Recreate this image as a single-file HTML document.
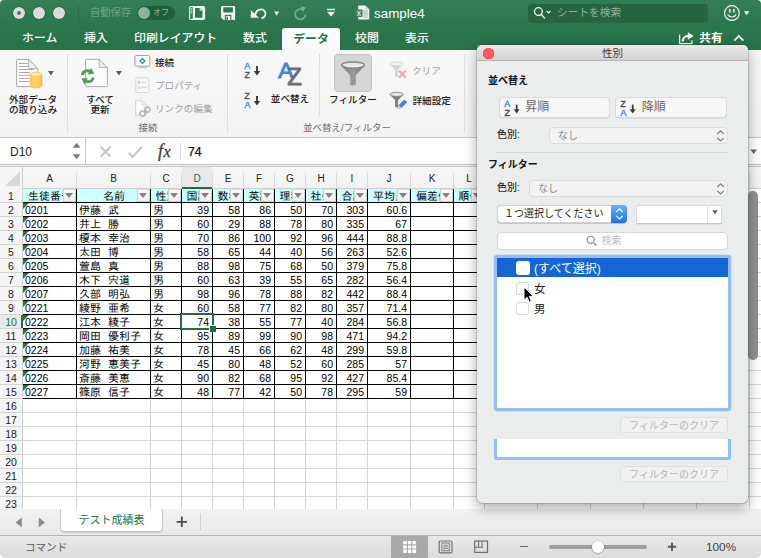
<!DOCTYPE html><html lang="ja"><head><meta charset="utf-8"><title>sample4</title><style>*{box-sizing:border-box;margin:0;padding:0}
html,body{width:761px;height:558px;overflow:hidden;background:#fff}
body{font-family:"Liberation Sans","Noto Sans CJK JP",sans-serif;font-size:11px;color:#222;position:relative}
.abs{position:absolute}
div{white-space:nowrap}
#titlebar{position:absolute;left:0;top:0;width:761px;height:50px;border-radius:4px 4px 0 0;background:linear-gradient(#337e54 0,#2f7a50 14px,#2a764b 28px,#27724a 50px)}
.tl{position:absolute;top:7px;width:12px;height:12px;border-radius:50%;background:#dcdcdc;box-shadow:0 0 0 0.6px rgba(20,70,40,.55)}
.tab{position:absolute;top:28px;height:22px;line-height:21px;font-size:11.9px;color:#fff;font-weight:500}
.tab.act{background:linear-gradient(#ffffff,#f8f8f8);color:#217346;border-radius:3px 3px 0 0;text-align:center;font-weight:700;line-height:23.5px;font-size:11.8px}
#ribbon{position:absolute;left:0;top:50px;width:761px;height:88px;background:linear-gradient(#f8f8f8,#f3f3f3);border-bottom:1px solid #c4c4c4}
.rl{position:absolute;font-size:9.6px;color:#1a1a1a;line-height:11px;font-weight:500}
.rl.dim{color:#9e9e9e;font-weight:400}
.rsep{position:absolute;width:1px;background:#dedede}
.glabel{position:absolute;font-size:9.5px;color:#6a6a6a;top:72px;line-height:12px}
#fbar{position:absolute;left:0;top:138px;width:761px;height:27px;background:#fff;border-bottom:1px solid #c6c6c6}
#grid{position:absolute;left:0;top:165px;width:761px;height:344px;background:#fff;overflow:hidden}
.ch{position:absolute;top:3px;height:21px;line-height:21px;text-align:center;font-size:10px;color:#222}
.rh{position:absolute;left:0;width:22px;height:13px;line-height:14px;text-align:center;font-size:10.5px;color:#222}
.vl{position:absolute;width:1px;background:#d4d4d4}
.hl{position:absolute;height:1px;background:#d4d4d4}
.bvl{position:absolute;width:1px;background:#000}
.bhl{position:absolute;height:1px;background:#000}
.c{position:absolute;height:13px;line-height:14px;font-size:11px;color:#000;overflow:hidden;font-family:"Liberation Sans","IPAGothic","Noto Sans CJK JP",sans-serif}
.c.r{text-align:right}
.c.n{font-size:10.5px}
.c.h{text-align:center;background:#ccffff}
.c i{font-style:normal;letter-spacing:-4px}
.fb{position:absolute;width:13.5px;height:13px;background:linear-gradient(#fbfbfb,#eeeeee);border:1px solid #d0d0d0;border-top-color:#dcdcdc}
.fb:after{content:"";position:absolute;left:1.4px;top:3.2px;border:4.2px solid transparent;border-top:5.2px solid #848484;border-bottom:0}
.tri{position:absolute;width:0;height:0;border-top:6px solid #1a7a38;border-right:6px solid transparent}
#sheetbar{position:absolute;left:0;top:509px;width:761px;height:27px;background:linear-gradient(#f2f2f2,#e9e9e9)}
#status{position:absolute;left:0;top:535px;width:761px;height:23px;border-radius:0 0 5px 5px;overflow:hidden;background:linear-gradient(#e9e9e9,#dcdcdc);border-top:1px solid #b4b4b4}
#pop{position:absolute;left:477px;top:45px;width:271px;height:458px;background:#ebecec;border-radius:5px;box-shadow:0 0 0 0.5px rgba(0,0,0,.28),0 5px 14px rgba(0,0,0,.35)}
#pop .ttl{position:absolute;left:0;top:0;width:271px;height:16px;background:linear-gradient(#eaeaea,#d2d2d2);border-radius:5px 5px 0 0;border-bottom:1px solid #b6b6b6;text-align:center;font-size:10.5px;line-height:17px;color:#3a3a3a}
.pb{position:absolute;height:21px;background:#f7f7f7;border:1px solid #dadada;border-radius:4px;box-shadow:0 0.5px 0.5px rgba(0,0,0,.12);font-size:12px;line-height:19px;color:#6a6a6a}
.sel{position:absolute;height:17px;background:#f3f3f3;border:1px solid #dcdcdc;border-radius:4px;font-size:10px;line-height:15px;color:#8a8a8a;padding-left:8px}
.plabel{position:absolute;font-size:10px;color:#2a2a2a;line-height:14px;font-weight:500}
.pbold{position:absolute;font-size:10px;font-weight:700;color:#111;line-height:14px}
.clr{position:absolute;left:143px;width:108px;height:16px;border:1px solid #dedede;border-radius:3.5px;background:#f1f1f1;color:#b4b4b4;font-size:10px;line-height:15.4px;text-align:center}
.cb{position:absolute;width:13.4px;height:13.4px;background:#fff;border:1px solid #d6d6d6;border-radius:3px}
</style></head><body>
<div id="titlebar">
<div class="tl" style="left:13px"></div>
<div class="tl" style="left:33px"></div>
<div class="tl" style="left:53px"></div>
<div class="abs" style="left:17px;top:11px;width:4px;height:4px;border-radius:50%;background:#6c6c6c"></div>
<div class="abs" style="left:78px;top:5px;width:1px;height:17px;background:rgba(0,0,0,.13)"></div>
<div class="abs" style="left:90px;top:6px;font-size:10.3px;line-height:14px;color:rgba(255,255,255,.33)">自動保存</div>
<div class="abs" style="left:137px;top:6px;width:38px;height:14px;border-radius:7px;background:#1d5f3b"></div>
<div class="abs" style="left:138px;top:7px;width:12px;height:12px;border-radius:50%;background:#8db49e"></div>
<div class="abs" style="left:153px;top:7px;font-size:8px;line-height:12px;color:rgba(255,255,255,.55)">オフ</div>
<svg class="abs" style="left:188px;top:5px;" width="18" height="16" viewBox="0 0 18 16"><rect x="1" y="0.9" width="16.1" height="14.2" rx="1.8" fill="#f4f8f5"/><rect x="2.3" y="2.2" width="2.5" height="11.6" fill="#2d784e"/><circle cx="3.55" cy="3.7" r="0.6" fill="#f4f8f5"/><circle cx="3.55" cy="5.7" r="0.6" fill="#f4f8f5"/><circle cx="3.55" cy="7.7" r="0.6" fill="#f4f8f5"/><path d="M7 2.9h4.4l3.1 3.1v6.8h-7.5z" fill="#2d784e"/><path d="M11.4 2.9v3.1h3.1z" fill="#f4f8f5" stroke="#2d784e" stroke-width="0.5"/></svg>
<svg class="abs" style="left:220px;top:5px;" width="16" height="16" viewBox="0 0 16 16"><path d="M2.5 0.9h11.2a1.4 1.4 0 0 1 1.4 1.4v11.4a1.4 1.4 0 0 1-1.4 1.4h-10l-2.6-2.4v-10.4a1.4 1.4 0 0 1 1.4-1.4z" fill="#f4f8f5"/><rect x="3.3" y="2.2" width="9.6" height="5.4" rx="0.6" fill="#2d784e"/><rect x="4.8" y="9.8" width="6.6" height="5.3" fill="#2d784e"/><rect x="5.9" y="10.9" width="4.4" height="4.2" fill="#f4f8f5"/><rect x="6.6" y="11.8" width="1.4" height="3.3" fill="#2d784e"/></svg>
<svg class="abs" style="left:250px;top:6px;" width="18" height="14" viewBox="0 0 18 14"><path d="M5.4 8.2 C6.6 3.4 12 2 14.6 5.2 C16.8 8 15 11.4 12.2 12" fill="none" stroke="#f4f8f5" stroke-width="1.8" stroke-linecap="round"/><path d="M0.8 3.9v7.9h8.2z" fill="#f4f8f5"/></svg>
<svg class="abs" style="left:274px;top:11px;" width="6" height="5" viewBox="0 0 6 5"><path d="M0 0.6h5.2l-2.6 3.9z" fill="#f4f8f5"/></svg>
<svg class="abs" style="left:293px;top:6px;" width="15" height="15" viewBox="0 0 15 15"><path d="M9.4 3.4 A5.2 5.2 0 1 0 12.6 8.4" fill="none" stroke="rgba(255,255,255,.36)" stroke-width="1.7"/><path d="M7.6 0.6l5.4 1-3 4.4z" fill="rgba(255,255,255,.36)"/></svg>
<svg class="abs" style="left:326px;top:8px;" width="10" height="9" viewBox="0 0 10 9"><path d="M1 1.5h8" stroke="#f4f8f5" stroke-width="1.4"/><path d="M1 3.8h8l-4 4.6z" fill="#f4f8f5"/></svg>
<svg class="abs" style="left:355px;top:5px;" width="15" height="15" viewBox="0 0 15 15"><path d="M3.2 0.6h7.2l3.8 3.8v10h-11z" fill="#f2f4f3"/><path d="M10.4 0.6v3.8h3.8z" fill="#c9d6ce"/><path d="M8.3 6h4.6M8.3 8h4.6M8.3 10h4.6M8.3 12h4.6" stroke="#8fae9c" stroke-width="0.9"/><rect x="0.4" y="4.4" width="7.2" height="7.6" rx="0.8" fill="#3f7f5c"/><text x="4" y="10.6" font-size="6.5" font-weight="700" fill="#dfe9e3" text-anchor="middle" font-family="Liberation Sans, sans-serif">X</text></svg>
<div class="abs" style="left:374px;top:5.5px;font-size:13.4px;line-height:16px;color:#fff">sample4</div>
<div class="abs" style="left:528px;top:4px;width:180px;height:19px;border-radius:4px;background:#27653f"></div>
<svg class="abs" style="left:533px;top:6px;" width="20" height="14" viewBox="0 0 20 14"><circle cx="5.4" cy="5.6" r="3.9" fill="none" stroke="#f4f8f5" stroke-width="1.3"/><path d="M8.2 8.6l3.2 3.4" stroke="#f4f8f5" stroke-width="1.5" stroke-linecap="round"/><path d="M13.6 5l1.9 1.9 1.9-1.9" fill="none" stroke="#f4f8f5" stroke-width="1.1"/></svg>
<div class="abs" style="left:557px;top:5px;font-size:10.7px;line-height:15px;color:rgba(255,255,255,.5)">シートを検索</div>
<svg class="abs" style="left:723px;top:4px;" width="18" height="18" viewBox="0 0 18 18"><circle cx="8.9" cy="9.05" r="7.4" fill="none" stroke="#f4f8f5" stroke-width="1.2"/><path d="M6.8 5v3.4M10.9 5v3.4" stroke="#f4f8f5" stroke-width="1.5"/><path d="M4.9 10.9c1.8 2.8 6.2 2.8 8 0" fill="none" stroke="#f4f8f5" stroke-width="1.2" stroke-linecap="round"/></svg>
<svg class="abs" style="left:744px;top:11px;" width="6" height="5" viewBox="0 0 6 5"><path d="M0 0.2h5.3l-2.65 4z" fill="#f4f8f5"/></svg>
<div class="tab" style="left:22px">ホーム</div>
<div class="tab" style="left:84px">挿入</div>
<div class="tab" style="left:134px">印刷レイアウト</div>
<div class="tab" style="left:243px">数式</div>
<div class="tab" style="left:355px">校閲</div>
<div class="tab" style="left:405px">表示</div>
<div class="tab act" style="left:282px;width:58px">データ</div>
<svg class="abs" style="left:677px;top:31px;" width="18" height="14" viewBox="0 0 18 14"><path d="M2.6 3.4v9.2h12.3v-3.400" fill="none" stroke="#f4f8f5" stroke-width="1.3"/><path d="M5.6 10.6c0.300-3.800 2.600-5.600 6.200-5.800" fill="none" stroke="#f4f8f5" stroke-width="2.1"/><path d="M10.8 1.200l5.800 3.700-5.800 3.900z" fill="#f4f8f5"/></svg>
<div class="tab" style="left:699.3px;top:27.3px;font-size:11.6px;font-weight:700">共有</div>
<svg class="abs" style="left:733px;top:33.5px;" width="12" height="8" viewBox="0 0 12 8"><path d="M1.2 6.600l4.600-4.500 4.600 4.500" fill="none" stroke="#f4f8f5" stroke-width="1.9"/></svg>
</div>
<div id="ribbon">
<svg class="abs" style="left:15px;top:8px;" width="28" height="31" viewBox="0 0 28 31"><defs><linearGradient id="cy" x1="0" x2="1"><stop offset="0" stop-color="#fbc955"/><stop offset=".5" stop-color="#fdd468"/><stop offset="1" stop-color="#f6c24c"/></linearGradient></defs><path d="M2.6 1.4h11l9.2 9.2v17a1 1 0 0 1-1 1h-19.2a1 1 0 0 1-1-1v-25.2a1 1 0 0 1 1-1z" fill="#ffffff" stroke="#a9a9a9" stroke-width="1"/><path d="M13.6 1.4v8.2a1 1 0 0 0 1 1h8.2z" fill="#f0f0f0" stroke="#a9a9a9" stroke-width="0.9"/><path d="M4 5.4h9M4 8.4h9M4 11.5h14.5M4 14.5h11M4 17.4h10.6M4 20.4h10.6M4 23.4h10.6" stroke="#a6a6a6" stroke-width="1"/><path d="M15.2 16.3v11.2c0 1.4 2.7 2.4 5.9 2.4s5.9-1 5.9-2.4v-11.2z" fill="url(#cy)" stroke="#e6b33e" stroke-width="0.6"/><ellipse cx="21.1" cy="16.3" rx="5.9" ry="2.1" fill="#ffe9a9" stroke="#ebb945" stroke-width="0.6"/></svg>
<svg class="abs" style="left:47.6px;top:21px;" width="6" height="5" viewBox="0 0 6 5"><path d="M0 0h5.8l-2.9 4.4z" fill="#5a5a5a"/></svg>
<div class="rl" style="left:3px;top:44.7px;text-align:center;width:60px;line-height:10.6px">外部データ<br>の取り込み</div>
<div class="rsep" style="left:67px;top:4px;height:79px"></div>
<svg class="abs" style="left:80px;top:8px;" width="29" height="31" viewBox="0 0 29 31"><path d="M6.6 1.4h12.6l8.2 8.2v18a1 1 0 0 1-1 1h-19.8a1 1 0 0 1-1-1v-25.2a1 1 0 0 1 1-1z" fill="#fcfcfc" stroke="#adadad" stroke-width="1"/><path d="M19.2 1.4v7.2a1 1 0 0 0 1 1h7.2z" fill="#ebebeb" stroke="#adadad" stroke-width="0.9"/><path d="M1 17c0.4-4.4 5-6.8 9-5.2l1-2 3.2 6-6.4 0.6 1-2c-2.2-0.8-4.4 0.2-5 2.6z" fill="#4f9d5a"/><path d="M14.6 19.4c-0.4 4.4-5 6.8-9 5.2l-1 2-3.2-6 6.4-0.6-1 2c2.2 0.8 4.4-0.2 5-2.6z" fill="#4f9d5a"/></svg>
<svg class="abs" style="left:116px;top:21px;" width="6" height="5" viewBox="0 0 6 5"><path d="M0 0h5.8l-2.9 4.4z" fill="#5a5a5a"/></svg>
<div class="rl" style="left:70px;top:44.7px;text-align:center;width:60px;line-height:10.6px">すべて<br>更新</div>
<svg class="abs" style="left:134px;top:5px;" width="17" height="14" viewBox="0 0 17 14"><rect x="0.9" y="0.6" width="15" height="10.6" rx="1.4" fill="#fff" stroke="#9a9a9a" stroke-width="1"/><path d="M5.5 11.4h6.6l0.8 1.9h-8.2z" fill="#c8c8c8"/><path d="M8.4 2.6l3.3 3.3-3.3 3.3-3.3-3.3z" fill="#2f7fe0"/><circle cx="8.4" cy="5.9" r="1.2" fill="#fff"/></svg>
<div class="rl" style="left:155px;top:6.5px">接続</div>
<svg class="abs" style="left:135px;top:27px;" width="15" height="17" viewBox="0 0 15 17"><rect x="0.8" y="0.8" width="13" height="14.8" rx="1.6" fill="#f8f8f8" stroke="#d6d6d6" stroke-width="1"/><circle cx="4" cy="5.4" r="1.2" fill="#a9c6ee"/><path d="M6.4 5.4h5" stroke="#b9d0ee" stroke-width="1"/><circle cx="4" cy="10.4" r="1.1" fill="none" stroke="#cfcfcf" stroke-width="0.8"/><path d="M6.4 10.4h5" stroke="#d0d0d0" stroke-width="1"/></svg>
<div class="rl dim" style="left:155px;top:29.5px">プロパティ</div>
<svg class="abs" style="left:134px;top:50px;" width="18" height="18" viewBox="0 0 18 18"><path d="M1.6 0.8h6.6l4 4v10.6h-10.6z" fill="#fafafa" stroke="#d4d4d4" stroke-width="1"/><path d="M8.2 0.8v4h4" fill="none" stroke="#d4d4d4" stroke-width="0.8"/><g fill="none" stroke="#b4b4b4" stroke-width="1.5"><circle cx="8.6" cy="13.6" r="2.6"/><circle cx="13.4" cy="9.6" r="2.6"/><path d="M9.8 12.6l2.6-2.2"/></g></svg>
<div class="rl dim" style="left:155px;top:52.5px">リンクの編集</div>
<div class="glabel" style="left:138.5px">接続</div>
<div class="rsep" style="left:227px;top:4px;height:79px"></div>
<svg class="abs" style="left:244px;top:12px;" width="18" height="18" viewBox="0 0 18 18"><text x="0.3" y="6.9" font-size="9" font-weight="400" stroke="#3f84d8" stroke-width="0.3" fill="#3f84d8" font-family="Liberation Sans, sans-serif">A</text><text x="0.5" y="15.9" font-size="9" font-weight="400" stroke="#505050" stroke-width="0.3" fill="#505050" font-family="Liberation Sans, sans-serif">Z</text><path d="M13 4v7" stroke="#3a3a3a" stroke-width="1.9"/><path d="M9.8 9.1h6.4l-3.2 4.3z" fill="#3a3a3a"/></svg>
<svg class="abs" style="left:244px;top:42px;" width="18" height="18" viewBox="0 0 18 18"><text x="0.3" y="6.9" font-size="9" font-weight="400" stroke="#505050" stroke-width="0.3" fill="#505050" font-family="Liberation Sans, sans-serif">Z</text><text x="0.5" y="15.9" font-size="9" font-weight="400" stroke="#3f84d8" stroke-width="0.3" fill="#3f84d8" font-family="Liberation Sans, sans-serif">A</text><path d="M13 4v7" stroke="#3a3a3a" stroke-width="1.9"/><path d="M9.8 9.1h6.4l-3.2 4.3z" fill="#3a3a3a"/></svg>
<svg class="abs" style="left:276px;top:8px;" width="28" height="30" viewBox="0 0 28 30"><text x="2.3" y="20.1" font-size="22.8" font-weight="400" fill="#4384d6" stroke="#4384d6" stroke-width="0.9" font-family="Liberation Sans, sans-serif">A</text><text x="11.2" y="27.2" font-size="24" font-weight="400" fill="#6c6c6c" stroke="#6c6c6c" stroke-width="0.8" font-family="Liberation Sans, sans-serif">Z</text></svg>
<div class="rl" style="left:260px;top:42.5px;width:60px;text-align:center">並べ替え</div>
<div class="rsep" style="left:319px;top:4px;height:62px"></div>
<div class="abs" style="left:334px;top:4px;width:38px;height:38px;border-radius:4px;background:#d6d6d6;border:1px solid #c2c2c2"></div>
<svg class="abs" style="left:340px;top:10px;" width="26" height="27" viewBox="0 0 26 27"><defs><linearGradient id="fg" x1="0" x2="1"><stop offset="0" stop-color="#808080"/><stop offset=".5" stop-color="#989898"/><stop offset="1" stop-color="#7a7a7a"/></linearGradient><linearGradient id="fe" x1="0" x2="0" y1="0" y2="1"><stop offset="0" stop-color="#dcdcdc"/><stop offset="1" stop-color="#f6f6f6"/></linearGradient></defs><path d="M1.2 5h23.6c-1.6 3.6-6.4 6.6-9 10.4v8.6c0 2-5.6 2-5.6 0v-8.6c-2.6-3.8-7.400-6.800-9-10.400z" fill="url(#fg)"/><ellipse cx="13" cy="5" rx="11.4" ry="3.1" fill="url(#fe)" stroke="#868686" stroke-width="1.5"/></svg>
<div class="rl" style="left:323px;top:43.5px;width:60px;text-align:center">フィルター</div>
<svg class="abs" style="left:389px;top:11px;" width="19" height="19" viewBox="0 0 19 19"><path d="M0.8 3h13.4l-5.2 5.8v6.4c0 1-3 1-3 0v-6.4z" fill="#d4d4d4"/><ellipse cx="7.5" cy="3" rx="6.7" ry="1.9" fill="#f4f4f4" stroke="#cfcfcf" stroke-width="0.8"/><path d="M10 9.6l7 7M17 9.6l-7 7" stroke="#ecaeae" stroke-width="2.2"/></svg>
<div class="rl dim" style="left:412px;top:14.6px">クリア</div>
<svg class="abs" style="left:389px;top:41px;" width="19" height="19" viewBox="0 0 19 19"><path d="M0.8 3.4h13.6l-5.3 5.8v6.6c0 1-3 1-3 0v-6.6z" fill="#7e7e7e"/><ellipse cx="7.6" cy="3.4" rx="6.8" ry="2" fill="#e8e8e8" stroke="#868686" stroke-width="0.9"/><path d="M8.4 18l1.2-3.8 5.8-5.8 2.8 2.8-5.8 5.8z" fill="#3d86dc"/><path d="M8.4 18l1.2-3.8 2.7 2.7z" fill="#d8d8d8"/></svg>
<div class="rl" style="left:412.5px;top:45px">詳細設定</div>
<div class="glabel" style="left:303px">並べ替え/フィルター</div>
<div class="rsep" style="left:464px;top:4px;height:79px"></div>
</div>
<div id="fbar">
<div class="abs" style="left:10px;top:6px;font-size:12px;line-height:16px;color:#222">D10</div>
<svg class="abs" style="left:72px;top:4px;" width="10" height="19" viewBox="0 0 10 19"><path d="M0.8 5.8l3.8-5 3.8 5z" fill="#787878"/><path d="M0.8 12.2l3.8 5 3.8-5z" fill="#787878"/></svg>
<div class="abs" style="left:85px;top:0;width:1px;height:27px;background:#cccccc"></div>
<svg class="abs" style="left:99px;top:7px;" width="14" height="14" viewBox="0 0 14 14"><path d="M1.6 1.8l10 10M11.6 1.8l-10 10" stroke="#c8c8c8" stroke-width="2.2"/></svg>
<svg class="abs" style="left:127px;top:7px;" width="16" height="14" viewBox="0 0 16 14"><path d="M1.5 7.7l4.2 4.2 9-10" fill="none" stroke="#c8c8c8" stroke-width="2.2"/></svg>
<div class="abs" style="left:158px;top:4px;font-size:18px;line-height:18px;color:#3c3c3c;font-family:'Liberation Serif',serif;font-style:italic;-webkit-text-stroke:0.3px #3c3c3c">f<span style="font-size:16px;margin-left:0.5px">x</span></div>
<div class="abs" style="left:180px;top:5px;width:1px;height:17px;background:#d8d8d8"></div>
<div class="abs" style="left:188px;top:6px;font-size:12.2px;line-height:16px;color:#111;-webkit-text-stroke:0.25px #111">74</div>
<svg class="abs" style="left:750px;top:11px;" width="8" height="6" viewBox="0 0 8 6"><path d="M0.4 0.4h6.6l-3.3 4.6z" fill="#666"/></svg>
</div>
<div id="grid">
<div class="abs" style="left:0;top:0;width:761px;height:2px;background:#f0f0f0;border-bottom:1px solid #c9c9c9"></div>
<div class="abs" style="left:0;top:2px;width:761px;height:22px;background:linear-gradient(#f7f7f7,#f2f2f2);border-bottom:1px solid #cfcfcf"></div>
<div class="abs" style="left:0;top:2px;width:23px;height:342px;background:#f5f5f5;border-right:1px solid #cfcfcf"></div>
<svg class="abs" style="left:5px;top:6px;" width="16" height="16" viewBox="0 0 16 16"><path d="M15 0.200v14.800h-14.800z" fill="#d8d8d8"/></svg>
<div class="ch" style="left:23px;width:53px;">A</div>
<div class="vl" style="left:76px;top:4px;height:20px;background:linear-gradient(rgba(214,214,214,0),#d9d9d9 40%)"></div>
<div class="vl" style="left:76px;top:24px;height:321px"></div>
<div class="ch" style="left:77px;width:73px;">B</div>
<div class="vl" style="left:150px;top:4px;height:20px;background:linear-gradient(rgba(214,214,214,0),#d9d9d9 40%)"></div>
<div class="vl" style="left:150px;top:24px;height:321px"></div>
<div class="ch" style="left:151px;width:30px;">C</div>
<div class="vl" style="left:181px;top:4px;height:20px;background:linear-gradient(rgba(214,214,214,0),#d9d9d9 40%)"></div>
<div class="vl" style="left:181px;top:24px;height:321px"></div>
<div class="abs" style="left:182px;top:2px;width:30px;height:22px;background:#e9e9e9;border-bottom:2px solid #1e6e42"></div>
<div class="ch" style="left:182px;width:30px;color:#1e6e42;">D</div>
<div class="vl" style="left:212px;top:4px;height:20px;background:linear-gradient(rgba(214,214,214,0),#d9d9d9 40%)"></div>
<div class="vl" style="left:212px;top:24px;height:321px"></div>
<div class="ch" style="left:213px;width:30px;">E</div>
<div class="vl" style="left:243px;top:4px;height:20px;background:linear-gradient(rgba(214,214,214,0),#d9d9d9 40%)"></div>
<div class="vl" style="left:243px;top:24px;height:321px"></div>
<div class="ch" style="left:244px;width:30px;">F</div>
<div class="vl" style="left:274px;top:4px;height:20px;background:linear-gradient(rgba(214,214,214,0),#d9d9d9 40%)"></div>
<div class="vl" style="left:274px;top:24px;height:321px"></div>
<div class="ch" style="left:275px;width:30px;">G</div>
<div class="vl" style="left:305px;top:4px;height:20px;background:linear-gradient(rgba(214,214,214,0),#d9d9d9 40%)"></div>
<div class="vl" style="left:305px;top:24px;height:321px"></div>
<div class="ch" style="left:306px;width:30px;">H</div>
<div class="vl" style="left:336px;top:4px;height:20px;background:linear-gradient(rgba(214,214,214,0),#d9d9d9 40%)"></div>
<div class="vl" style="left:336px;top:24px;height:321px"></div>
<div class="ch" style="left:337px;width:30px;">I</div>
<div class="vl" style="left:367px;top:4px;height:20px;background:linear-gradient(rgba(214,214,214,0),#d9d9d9 40%)"></div>
<div class="vl" style="left:367px;top:24px;height:321px"></div>
<div class="ch" style="left:368px;width:42px;">J</div>
<div class="vl" style="left:410px;top:4px;height:20px;background:linear-gradient(rgba(214,214,214,0),#d9d9d9 40%)"></div>
<div class="vl" style="left:410px;top:24px;height:321px"></div>
<div class="ch" style="left:411px;width:42px;">K</div>
<div class="vl" style="left:453px;top:4px;height:20px;background:linear-gradient(rgba(214,214,214,0),#d9d9d9 40%)"></div>
<div class="vl" style="left:453px;top:24px;height:321px"></div>
<div class="ch" style="left:454px;width:30px;">L</div>
<div class="vl" style="left:484px;top:4px;height:20px;background:linear-gradient(rgba(214,214,214,0),#d9d9d9 40%)"></div>
<div class="vl" style="left:484px;top:24px;height:321px"></div>
<div class="ch" style="left:485px;width:52px;">M</div>
<div class="vl" style="left:537px;top:4px;height:20px;background:linear-gradient(rgba(214,214,214,0),#d9d9d9 40%)"></div>
<div class="vl" style="left:537px;top:24px;height:321px"></div>
<div class="ch" style="left:538px;width:52px;">N</div>
<div class="vl" style="left:590px;top:4px;height:20px;background:linear-gradient(rgba(214,214,214,0),#d9d9d9 40%)"></div>
<div class="vl" style="left:590px;top:24px;height:321px"></div>
<div class="ch" style="left:591px;width:52px;">O</div>
<div class="vl" style="left:643px;top:4px;height:20px;background:linear-gradient(rgba(214,214,214,0),#d9d9d9 40%)"></div>
<div class="vl" style="left:643px;top:24px;height:321px"></div>
<div class="ch" style="left:644px;width:52px;">P</div>
<div class="vl" style="left:696px;top:4px;height:20px;background:linear-gradient(rgba(214,214,214,0),#d9d9d9 40%)"></div>
<div class="vl" style="left:696px;top:24px;height:321px"></div>
<div class="ch" style="left:697px;width:52px;">Q</div>
<div class="vl" style="left:749px;top:4px;height:20px;background:linear-gradient(rgba(214,214,214,0),#d9d9d9 40%)"></div>
<div class="vl" style="left:749px;top:24px;height:321px"></div>
<div class="ch" style="left:750px;width:52px;">R</div>
<div class="vl" style="left:802px;top:4px;height:20px;background:linear-gradient(rgba(214,214,214,0),#d9d9d9 40%)"></div>
<div class="vl" style="left:802px;top:24px;height:321px"></div>
<div class="rh" style="top:24px;">1</div>
<div class="hl" style="left:0;top:37px;width:761px"></div>
<div class="rh" style="top:38px;">2</div>
<div class="hl" style="left:0;top:51px;width:761px"></div>
<div class="rh" style="top:52px;">3</div>
<div class="hl" style="left:0;top:65px;width:761px"></div>
<div class="rh" style="top:66px;">4</div>
<div class="hl" style="left:0;top:79px;width:761px"></div>
<div class="rh" style="top:80px;">5</div>
<div class="hl" style="left:0;top:93px;width:761px"></div>
<div class="rh" style="top:94px;">6</div>
<div class="hl" style="left:0;top:107px;width:761px"></div>
<div class="rh" style="top:108px;">7</div>
<div class="hl" style="left:0;top:121px;width:761px"></div>
<div class="rh" style="top:122px;">8</div>
<div class="hl" style="left:0;top:135px;width:761px"></div>
<div class="rh" style="top:136px;">9</div>
<div class="hl" style="left:0;top:149px;width:761px"></div>
<div class="abs" style="left:0;top:150px;width:23px;height:13px;background:#e9e9e9;border-right:2px solid #1e6e42"></div>
<div class="rh" style="top:150px;color:#1e6e42;">10</div>
<div class="hl" style="left:0;top:163px;width:761px"></div>
<div class="rh" style="top:164px;">11</div>
<div class="hl" style="left:0;top:177px;width:761px"></div>
<div class="rh" style="top:178px;">12</div>
<div class="hl" style="left:0;top:191px;width:761px"></div>
<div class="rh" style="top:192px;">13</div>
<div class="hl" style="left:0;top:205px;width:761px"></div>
<div class="rh" style="top:206px;">14</div>
<div class="hl" style="left:0;top:219px;width:761px"></div>
<div class="rh" style="top:220px;">15</div>
<div class="hl" style="left:0;top:233px;width:761px"></div>
<div class="rh" style="top:234px;">16</div>
<div class="hl" style="left:0;top:247px;width:761px"></div>
<div class="rh" style="top:248px;">17</div>
<div class="hl" style="left:0;top:261px;width:761px"></div>
<div class="rh" style="top:262px;">18</div>
<div class="hl" style="left:0;top:275px;width:761px"></div>
<div class="rh" style="top:276px;">19</div>
<div class="hl" style="left:0;top:289px;width:761px"></div>
<div class="rh" style="top:290px;">20</div>
<div class="hl" style="left:0;top:303px;width:761px"></div>
<div class="rh" style="top:304px;">21</div>
<div class="hl" style="left:0;top:317px;width:761px"></div>
<div class="rh" style="top:318px;">22</div>
<div class="hl" style="left:0;top:331px;width:761px"></div>
<div class="rh" style="top:332px;">23</div>
<div class="hl" style="left:0;top:345px;width:761px"></div>
<div class="c h" style="left:23px;top:24px;width:53px;padding-left:1px;line-height:14.6px">生徒番号</div>
<div class="fb" style="left:62.5px;top:24px"></div>
<div class="c h" style="left:77px;top:24px;width:73px;padding-left:1px;line-height:14.6px">名前</div>
<div class="fb" style="left:136.5px;top:24px"></div>
<div class="c h" style="left:151px;top:24px;width:30px;padding-left:1px;line-height:14.6px">性別</div>
<div class="fb" style="left:167.5px;top:24px"></div>
<div class="c h" style="left:182px;top:24px;width:30px;padding-left:1px;line-height:14.6px">国語</div>
<div class="fb" style="left:198.5px;top:24px"></div>
<div class="c h" style="left:213px;top:24px;width:30px;padding-left:1px;line-height:14.6px">数学</div>
<div class="fb" style="left:229.5px;top:24px"></div>
<div class="c h" style="left:244px;top:24px;width:30px;padding-left:1px;line-height:14.6px">英語</div>
<div class="fb" style="left:260.5px;top:24px"></div>
<div class="c h" style="left:275px;top:24px;width:30px;padding-left:1px;line-height:14.6px">理科</div>
<div class="fb" style="left:291.5px;top:24px"></div>
<div class="c h" style="left:306px;top:24px;width:30px;padding-left:1px;line-height:14.6px">社会</div>
<div class="fb" style="left:322.5px;top:24px"></div>
<div class="c h" style="left:337px;top:24px;width:30px;padding-left:1px;line-height:14.6px">合計</div>
<div class="fb" style="left:353.5px;top:24px"></div>
<div class="c h" style="left:368px;top:24px;width:42px;padding-left:1px;line-height:14.6px">平均点</div>
<div class="fb" style="left:396.5px;top:24px"></div>
<div class="c h" style="left:411px;top:24px;width:42px;padding-left:1px;line-height:14.6px">偏差値</div>
<div class="fb" style="left:439.5px;top:24px"></div>
<div class="c h" style="left:454px;top:24px;width:30px;padding-left:1px;line-height:14.6px">順位</div>
<div class="fb" style="left:470.5px;top:24px"></div>
<div class="c n" style="left:25px;top:38px;width:51px">0201</div>
<div class="c" style="left:79px;top:38px;width:71px">伊藤<i>　</i>武</div>
<div class="c" style="left:153px;top:38px;width:28px">男</div>
<div class="c r n" style="left:182px;top:38px;width:27px">39</div>
<div class="c r n" style="left:213px;top:38px;width:27px">58</div>
<div class="c r n" style="left:244px;top:38px;width:27px">86</div>
<div class="c r n" style="left:275px;top:38px;width:27px">50</div>
<div class="c r n" style="left:306px;top:38px;width:27px">70</div>
<div class="c r n" style="left:337px;top:38px;width:27px">303</div>
<div class="c r n" style="left:368px;top:38px;width:39px">60.6</div>
<div class="tri" style="left:23px;top:38px"></div>
<div class="c n" style="left:25px;top:52px;width:51px">0202</div>
<div class="c" style="left:79px;top:52px;width:71px">井上<i>　</i>勝</div>
<div class="c" style="left:153px;top:52px;width:28px">男</div>
<div class="c r n" style="left:182px;top:52px;width:27px">60</div>
<div class="c r n" style="left:213px;top:52px;width:27px">29</div>
<div class="c r n" style="left:244px;top:52px;width:27px">88</div>
<div class="c r n" style="left:275px;top:52px;width:27px">78</div>
<div class="c r n" style="left:306px;top:52px;width:27px">80</div>
<div class="c r n" style="left:337px;top:52px;width:27px">335</div>
<div class="c r n" style="left:368px;top:52px;width:39px">67</div>
<div class="tri" style="left:23px;top:52px"></div>
<div class="c n" style="left:25px;top:66px;width:51px">0203</div>
<div class="c" style="left:79px;top:66px;width:71px">榎本<i>　</i>幸治</div>
<div class="c" style="left:153px;top:66px;width:28px">男</div>
<div class="c r n" style="left:182px;top:66px;width:27px">70</div>
<div class="c r n" style="left:213px;top:66px;width:27px">86</div>
<div class="c r n" style="left:244px;top:66px;width:27px">100</div>
<div class="c r n" style="left:275px;top:66px;width:27px">92</div>
<div class="c r n" style="left:306px;top:66px;width:27px">96</div>
<div class="c r n" style="left:337px;top:66px;width:27px">444</div>
<div class="c r n" style="left:368px;top:66px;width:39px">88.8</div>
<div class="tri" style="left:23px;top:66px"></div>
<div class="c n" style="left:25px;top:80px;width:51px">0204</div>
<div class="c" style="left:79px;top:80px;width:71px">太田<i>　</i>博</div>
<div class="c" style="left:153px;top:80px;width:28px">男</div>
<div class="c r n" style="left:182px;top:80px;width:27px">58</div>
<div class="c r n" style="left:213px;top:80px;width:27px">65</div>
<div class="c r n" style="left:244px;top:80px;width:27px">44</div>
<div class="c r n" style="left:275px;top:80px;width:27px">40</div>
<div class="c r n" style="left:306px;top:80px;width:27px">56</div>
<div class="c r n" style="left:337px;top:80px;width:27px">263</div>
<div class="c r n" style="left:368px;top:80px;width:39px">52.6</div>
<div class="tri" style="left:23px;top:80px"></div>
<div class="c n" style="left:25px;top:94px;width:51px">0205</div>
<div class="c" style="left:79px;top:94px;width:71px">萱島<i>　</i>真</div>
<div class="c" style="left:153px;top:94px;width:28px">男</div>
<div class="c r n" style="left:182px;top:94px;width:27px">88</div>
<div class="c r n" style="left:213px;top:94px;width:27px">98</div>
<div class="c r n" style="left:244px;top:94px;width:27px">75</div>
<div class="c r n" style="left:275px;top:94px;width:27px">68</div>
<div class="c r n" style="left:306px;top:94px;width:27px">50</div>
<div class="c r n" style="left:337px;top:94px;width:27px">379</div>
<div class="c r n" style="left:368px;top:94px;width:39px">75.8</div>
<div class="tri" style="left:23px;top:94px"></div>
<div class="c n" style="left:25px;top:108px;width:51px">0206</div>
<div class="c" style="left:79px;top:108px;width:71px">木下<i>　</i>宍道</div>
<div class="c" style="left:153px;top:108px;width:28px">男</div>
<div class="c r n" style="left:182px;top:108px;width:27px">60</div>
<div class="c r n" style="left:213px;top:108px;width:27px">63</div>
<div class="c r n" style="left:244px;top:108px;width:27px">39</div>
<div class="c r n" style="left:275px;top:108px;width:27px">55</div>
<div class="c r n" style="left:306px;top:108px;width:27px">65</div>
<div class="c r n" style="left:337px;top:108px;width:27px">282</div>
<div class="c r n" style="left:368px;top:108px;width:39px">56.4</div>
<div class="tri" style="left:23px;top:108px"></div>
<div class="c n" style="left:25px;top:122px;width:51px">0207</div>
<div class="c" style="left:79px;top:122px;width:71px">久部<i>　</i>明弘</div>
<div class="c" style="left:153px;top:122px;width:28px">男</div>
<div class="c r n" style="left:182px;top:122px;width:27px">98</div>
<div class="c r n" style="left:213px;top:122px;width:27px">96</div>
<div class="c r n" style="left:244px;top:122px;width:27px">78</div>
<div class="c r n" style="left:275px;top:122px;width:27px">88</div>
<div class="c r n" style="left:306px;top:122px;width:27px">82</div>
<div class="c r n" style="left:337px;top:122px;width:27px">442</div>
<div class="c r n" style="left:368px;top:122px;width:39px">88.4</div>
<div class="tri" style="left:23px;top:122px"></div>
<div class="c n" style="left:25px;top:136px;width:51px">0221</div>
<div class="c" style="left:79px;top:136px;width:71px">綾野<i>　</i>亜希</div>
<div class="c" style="left:153px;top:136px;width:28px">女</div>
<div class="c r n" style="left:182px;top:136px;width:27px">60</div>
<div class="c r n" style="left:213px;top:136px;width:27px">58</div>
<div class="c r n" style="left:244px;top:136px;width:27px">77</div>
<div class="c r n" style="left:275px;top:136px;width:27px">82</div>
<div class="c r n" style="left:306px;top:136px;width:27px">80</div>
<div class="c r n" style="left:337px;top:136px;width:27px">357</div>
<div class="c r n" style="left:368px;top:136px;width:39px">71.4</div>
<div class="tri" style="left:23px;top:136px"></div>
<div class="c n" style="left:25px;top:150px;width:51px">0222</div>
<div class="c" style="left:79px;top:150px;width:71px">江本<i>　</i>綾子</div>
<div class="c" style="left:153px;top:150px;width:28px">女</div>
<div class="c r n" style="left:182px;top:150px;width:27px">74</div>
<div class="c r n" style="left:213px;top:150px;width:27px">38</div>
<div class="c r n" style="left:244px;top:150px;width:27px">55</div>
<div class="c r n" style="left:275px;top:150px;width:27px">77</div>
<div class="c r n" style="left:306px;top:150px;width:27px">40</div>
<div class="c r n" style="left:337px;top:150px;width:27px">284</div>
<div class="c r n" style="left:368px;top:150px;width:39px">56.8</div>
<div class="tri" style="left:23px;top:150px"></div>
<div class="c n" style="left:25px;top:164px;width:51px">0223</div>
<div class="c" style="left:79px;top:164px;width:71px">岡田<i>　</i>優利子</div>
<div class="c" style="left:153px;top:164px;width:28px">女</div>
<div class="c r n" style="left:182px;top:164px;width:27px">95</div>
<div class="c r n" style="left:213px;top:164px;width:27px">89</div>
<div class="c r n" style="left:244px;top:164px;width:27px">99</div>
<div class="c r n" style="left:275px;top:164px;width:27px">90</div>
<div class="c r n" style="left:306px;top:164px;width:27px">98</div>
<div class="c r n" style="left:337px;top:164px;width:27px">471</div>
<div class="c r n" style="left:368px;top:164px;width:39px">94.2</div>
<div class="tri" style="left:23px;top:164px"></div>
<div class="c n" style="left:25px;top:178px;width:51px">0224</div>
<div class="c" style="left:79px;top:178px;width:71px">加藤<i>　</i>祐美</div>
<div class="c" style="left:153px;top:178px;width:28px">女</div>
<div class="c r n" style="left:182px;top:178px;width:27px">78</div>
<div class="c r n" style="left:213px;top:178px;width:27px">45</div>
<div class="c r n" style="left:244px;top:178px;width:27px">66</div>
<div class="c r n" style="left:275px;top:178px;width:27px">62</div>
<div class="c r n" style="left:306px;top:178px;width:27px">48</div>
<div class="c r n" style="left:337px;top:178px;width:27px">299</div>
<div class="c r n" style="left:368px;top:178px;width:39px">59.8</div>
<div class="tri" style="left:23px;top:178px"></div>
<div class="c n" style="left:25px;top:192px;width:51px">0225</div>
<div class="c" style="left:79px;top:192px;width:71px">河野<i>　</i>恵美子</div>
<div class="c" style="left:153px;top:192px;width:28px">女</div>
<div class="c r n" style="left:182px;top:192px;width:27px">45</div>
<div class="c r n" style="left:213px;top:192px;width:27px">80</div>
<div class="c r n" style="left:244px;top:192px;width:27px">48</div>
<div class="c r n" style="left:275px;top:192px;width:27px">52</div>
<div class="c r n" style="left:306px;top:192px;width:27px">60</div>
<div class="c r n" style="left:337px;top:192px;width:27px">285</div>
<div class="c r n" style="left:368px;top:192px;width:39px">57</div>
<div class="tri" style="left:23px;top:192px"></div>
<div class="c n" style="left:25px;top:206px;width:51px">0226</div>
<div class="c" style="left:79px;top:206px;width:71px">斎藤<i>　</i>美恵</div>
<div class="c" style="left:153px;top:206px;width:28px">女</div>
<div class="c r n" style="left:182px;top:206px;width:27px">90</div>
<div class="c r n" style="left:213px;top:206px;width:27px">82</div>
<div class="c r n" style="left:244px;top:206px;width:27px">68</div>
<div class="c r n" style="left:275px;top:206px;width:27px">95</div>
<div class="c r n" style="left:306px;top:206px;width:27px">92</div>
<div class="c r n" style="left:337px;top:206px;width:27px">427</div>
<div class="c r n" style="left:368px;top:206px;width:39px">85.4</div>
<div class="tri" style="left:23px;top:206px"></div>
<div class="c n" style="left:25px;top:220px;width:51px">0227</div>
<div class="c" style="left:79px;top:220px;width:71px">篠原<i>　</i>信子</div>
<div class="c" style="left:153px;top:220px;width:28px">女</div>
<div class="c r n" style="left:182px;top:220px;width:27px">48</div>
<div class="c r n" style="left:213px;top:220px;width:27px">77</div>
<div class="c r n" style="left:244px;top:220px;width:27px">42</div>
<div class="c r n" style="left:275px;top:220px;width:27px">50</div>
<div class="c r n" style="left:306px;top:220px;width:27px">78</div>
<div class="c r n" style="left:337px;top:220px;width:27px">295</div>
<div class="c r n" style="left:368px;top:220px;width:39px">59</div>
<div class="tri" style="left:23px;top:220px"></div>
<div class="bhl" style="left:23px;top:37px;width:462px"></div>
<div class="bhl" style="left:23px;top:51px;width:462px"></div>
<div class="bhl" style="left:23px;top:65px;width:462px"></div>
<div class="bhl" style="left:23px;top:79px;width:462px"></div>
<div class="bhl" style="left:23px;top:93px;width:462px"></div>
<div class="bhl" style="left:23px;top:107px;width:462px"></div>
<div class="bhl" style="left:23px;top:121px;width:462px"></div>
<div class="bhl" style="left:23px;top:135px;width:462px"></div>
<div class="bhl" style="left:23px;top:149px;width:462px"></div>
<div class="bhl" style="left:23px;top:163px;width:462px"></div>
<div class="bhl" style="left:23px;top:177px;width:462px"></div>
<div class="bhl" style="left:23px;top:191px;width:462px"></div>
<div class="bhl" style="left:23px;top:205px;width:462px"></div>
<div class="bhl" style="left:23px;top:219px;width:462px"></div>
<div class="bhl" style="left:23px;top:233px;width:462px"></div>
<div class="bvl" style="left:76px;top:24px;height:210px"></div>
<div class="bvl" style="left:150px;top:24px;height:210px"></div>
<div class="bvl" style="left:181px;top:24px;height:210px"></div>
<div class="bvl" style="left:212px;top:24px;height:210px"></div>
<div class="bvl" style="left:243px;top:24px;height:210px"></div>
<div class="bvl" style="left:274px;top:24px;height:210px"></div>
<div class="bvl" style="left:305px;top:24px;height:210px"></div>
<div class="bvl" style="left:336px;top:24px;height:210px"></div>
<div class="bvl" style="left:367px;top:24px;height:210px"></div>
<div class="bvl" style="left:410px;top:24px;height:210px"></div>
<div class="bvl" style="left:453px;top:24px;height:210px"></div>
<div class="bvl" style="left:484px;top:24px;height:210px"></div>
<div class="abs" style="left:180px;top:148px;width:34px;height:17px;border:2px solid #1e6e42"></div>
<div class="abs" style="left:209px;top:160px;width:7px;height:7px;background:#1e6e42;border:1px solid #fff;border-right:0;border-bottom:0"></div>
<div class="abs" style="left:748.4px;top:26px;width:9.6px;height:169px;border-radius:4.8px;background:rgba(128,128,128,.86)"></div>
</div>
<div id="sheetbar">
<svg class="abs" style="left:15px;top:8px;" width="8" height="11" viewBox="0 0 8 11"><path d="M6.8 0.6v9.6l-6.2-4.8z" fill="#8a8a8a"/></svg>
<svg class="abs" style="left:38px;top:8px;" width="8" height="11" viewBox="0 0 8 11"><path d="M0.8 0.6v9.6l6.2-4.8z" fill="#8a8a8a"/></svg>
<div class="abs" style="left:60px;top:0;width:103px;height:23px;background:#fff;border:1px solid #c8c8c8;border-top:0;border-radius:0 0 4px 4px;box-shadow:0 1px 1px rgba(0,0,0,.12);text-align:center;font-size:11px;line-height:22px;color:#217346">テスト成績表</div>
<svg class="abs" style="left:176px;top:7px;" width="12" height="12" viewBox="0 0 12 12"><path d="M5.8 0.6v10.4M0.6 5.8h10.4" stroke="#4a4a4a" stroke-width="1.8"/></svg>
<div class="abs" style="left:200px;top:4px;width:1px;height:17px;background:#cfcfcf"></div>
</div>
<div id="status">
<div class="abs" style="left:25px;top:4px;font-size:10.6px;line-height:14px;color:#555">コマンド</div>
<div class="abs" style="left:391px;top:0;width:37px;height:22px;background:#a9a9a9"></div>
<svg class="abs" style="left:402px;top:4px;" width="15" height="14" viewBox="0 0 15 14"><rect x="1.1" y="0.9" width="13" height="12.2" rx="1" fill="#fff"/><path d="M5.4 0.9v12.2M9.8 0.9v12.2M1.1 5v0M1.1 4.9h13M1.1 9h13" stroke="#a9a9a9" stroke-width="1.1"/></svg>
<svg class="abs" style="left:438px;top:4px;" width="15" height="14" viewBox="0 0 15 14"><rect x="1.2" y="1" width="12.8" height="11.8" rx="1.3" fill="none" stroke="#6e6e6e" stroke-width="1.2"/><rect x="3.9" y="3" width="7.4" height="7.8" fill="none" stroke="#6e6e6e" stroke-width="0.9"/><path d="M5.4 5.2h4.4M5.4 6.9h4.4M5.4 8.6h4.4" stroke="#6e6e6e" stroke-width="0.8"/></svg>
<svg class="abs" style="left:473px;top:4px;" width="16" height="14" viewBox="0 0 16 14"><rect x="1.7" y="1" width="12.8" height="11.4" fill="none" stroke="#6e6e6e" stroke-width="1.2"/><path d="M1.7 7.3h8.4M5.6 1v6.3M9 1v6.3" fill="none" stroke="#6e6e6e" stroke-width="1.1"/></svg>
<div class="abs" style="left:520.4px;top:9.6px;width:7.5px;height:1.8px;background:#6a6a6a"></div>
<div class="abs" style="left:549px;top:8.7px;width:98px;height:4.2px;border-radius:2.1px;background:#9e9e9e"></div>
<div class="abs" style="left:592px;top:5px;width:11.5px;height:11.5px;border-radius:50%;background:#fff;box-shadow:0 0.5px 1.5px rgba(0,0,0,.45)"></div>
<svg class="abs" style="left:667px;top:6px;" width="10" height="10" viewBox="0 0 10 10"><path d="M5 0.6v8.4M0.8 4.8h8.4" stroke="#5a5a5a" stroke-width="2"/></svg>
<div class="abs" style="left:706px;top:4px;font-size:11.8px;line-height:14px;color:#444">100%</div>
</div>
<div id="pop">
<div class="ttl">性別</div>
<div class="abs" style="left:6px;top:3px;width:11px;height:11px;border-radius:50%;background:#fc5b57;box-shadow:inset 0 0 0 0.5px #e0443f"></div>
<div class="pbold" style="left:11px;top:29px">並べ替え</div>
<div class="pb" style="left:21.7px;top:51.5px;width:111px"><span style="position:absolute;left:25.5px;top:0.8px">昇順</span></div>
<svg class="abs" style="left:26.5px;top:54.5px;" width="18" height="18" viewBox="0 0 18 18"><text x="0.2" y="7" font-size="9" font-weight="400" stroke="#3f84d8" stroke-width="0.35" fill="#3f84d8" font-family="Liberation Sans, sans-serif">A</text><text x="0.4" y="16" font-size="9" font-weight="400" stroke="#4a4a4a" stroke-width="0.35" fill="#4a4a4a" font-family="Liberation Sans, sans-serif">Z</text><path d="M12.7 4.6v6.4" stroke="#3a3a3a" stroke-width="1.8"/><path d="M9.7 9.3h6l-3 4.2z" fill="#3a3a3a"/></svg>
<div class="pb" style="left:138.3px;top:51.5px;width:111.5px"><span style="position:absolute;left:25.5px;top:0.8px">降順</span></div>
<svg class="abs" style="left:143px;top:54.5px;" width="18" height="18" viewBox="0 0 18 18"><text x="0.2" y="7" font-size="9" font-weight="400" stroke="#4a4a4a" stroke-width="0.35" fill="#4a4a4a" font-family="Liberation Sans, sans-serif">Z</text><text x="0.4" y="16" font-size="9" font-weight="400" stroke="#3f84d8" stroke-width="0.35" fill="#3f84d8" font-family="Liberation Sans, sans-serif">A</text><path d="M12.7 4.6v6.4" stroke="#3a3a3a" stroke-width="1.8"/><path d="M9.7 9.3h6l-3 4.2z" fill="#3a3a3a"/></svg>
<div class="plabel" style="left:20px;top:83px">色別:</div>
<div class="sel" style="left:72px;top:82px;width:178.5px">なし</div>
<svg class="abs" style="left:239px;top:83.5px;" width="9" height="14" viewBox="0 0 9 14"><path d="M1.2 5l3.3-3.2 3.3 3.2M1.2 8.8l3.3 3.2 3.3-3.2" fill="none" stroke="#7a7a7a" stroke-width="1.1"/></svg>
<div class="abs" style="left:20px;top:107px;width:230.5px;height:1px;background:#d6d6d6"></div>
<div class="pbold" style="left:11px;top:113px">フィルター</div>
<div class="plabel" style="left:20px;top:136px">色別:</div>
<div class="sel" style="left:52px;top:135px;width:198.5px">なし</div>
<svg class="abs" style="left:239px;top:136.7px;" width="9" height="14" viewBox="0 0 9 14"><path d="M1.2 5l3.3-3.2 3.3 3.2M1.2 8.8l3.3 3.2 3.3-3.2" fill="none" stroke="#7a7a7a" stroke-width="1.1"/></svg>
<div class="abs" style="left:19.6px;top:160px;width:130.4px;height:18px;background:#fff;border:1px solid #d2d2d2;border-radius:4px;box-shadow:0 0.5px 1px rgba(0,0,0,.18);font-size:10px;line-height:16px;padding-left:6.5px;color:#222">１つ選択してください</div>
<div class="abs" style="left:134px;top:160px;width:16px;height:18px;border-radius:0 4px 4px 0;background:linear-gradient(#6db1fb,#1b6ef3)"></div>
<svg class="abs" style="left:137.5px;top:162.3px;" width="9" height="14" viewBox="0 0 9 14"><path d="M1.2 5l3.3-3.2 3.3 3.2M1.2 8.8l3.3 3.2 3.3-3.2" fill="none" stroke="#fff" stroke-width="1.1"/></svg>
<div class="abs" style="left:159px;top:159.5px;width:85.7px;height:19px;background:#fff;border:1px solid #dadada;border-bottom-color:#c4c4c4;box-shadow:0 0.5px 0 rgba(0,0,0,.1)"></div>
<div class="abs" style="left:230px;top:160.5px;width:1px;height:17px;background:#e6e6e6"></div>
<svg class="abs" style="left:234.6px;top:165px;" width="7" height="6" viewBox="0 0 7 6"><path d="M0.4 0.3h5.2l-2.6 4.1z" fill="#5a5a5a"/></svg>
<div class="abs" style="left:20px;top:187px;width:231px;height:18px;background:#fff;border:1px solid #d6d6d6;border-radius:4px"></div>
<svg class="abs" style="left:108.5px;top:190px;" width="12" height="12" viewBox="0 0 12 12"><circle cx="4.8" cy="4.8" r="3.6" fill="none" stroke="#8c8c8c" stroke-width="1.1"/><path d="M7.4 7.6l3 3.2" stroke="#8c8c8c" stroke-width="1.3"/></svg>
<div class="abs" style="left:124.5px;top:189px;font-size:10px;line-height:14px;color:#bcbcbc">検索</div>
<div class="abs" style="left:16.6px;top:209.6px;width:237.3px;height:156.4px;background:#fff;border:3px solid #93c0f4;border-radius:3px;box-shadow:0 0 0 0.5px rgba(147,192,244,.5)"></div>
<div class="abs" style="left:19.6px;top:212.6px;width:231.3px;height:19.8px;background:#1465d6"></div>
<div class="abs" style="left:39px;top:216px;width:14px;height:14px;background:#fff;border-radius:3px"></div>
<div class="abs" style="left:57px;top:215.5px;font-size:12px;line-height:16px;color:#fff">(すべて選択)</div>
<div class="cb" style="left:39px;top:237px"></div>
<div class="abs" style="left:57px;top:235.7px;font-size:11.5px;line-height:16px;color:#222">女</div>
<div class="cb" style="left:39px;top:257px"></div>
<div class="abs" style="left:57px;top:255.7px;font-size:11.5px;line-height:16px;color:#222">男</div>
<svg class="abs" style="left:46px;top:241px;" width="12" height="18" viewBox="0 0 12 18"><path d="M1 1v13.2l3.1-3 2.1 5 2.2-0.9-2.1-4.9h4.2z" fill="#000" stroke="#fff" stroke-width="1"/></svg>
<div class="clr" style="top:372px">フィルターのクリア</div>
<div class="abs" style="left:16.6px;top:394px;width:237.3px;height:21px;background:#fff;border:3px solid #93c0f4;border-top:0;border-radius:0 0 3px 3px"></div>
<div class="clr" style="top:421px">フィルターのクリア</div>
</div>
</body></html>
